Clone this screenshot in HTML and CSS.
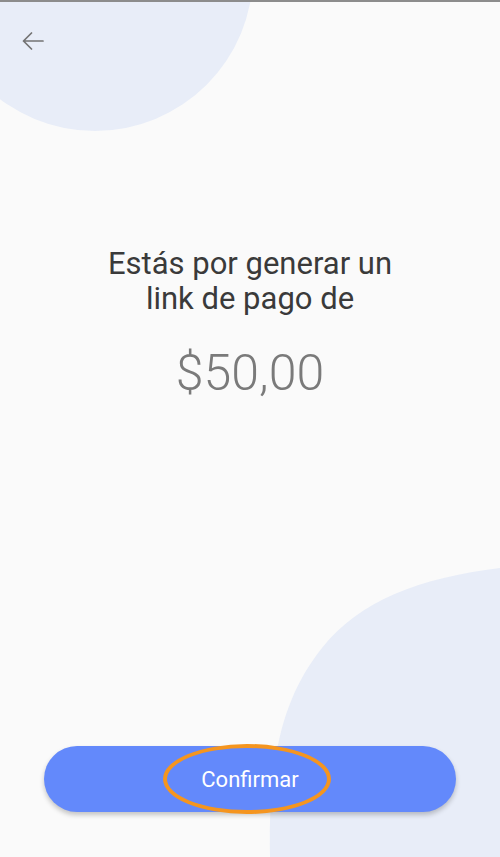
FILE: index.html
```html
<!DOCTYPE html>
<html lang="es">
<head>
    <meta charset="UTF-8">
    <meta name="viewport" content="width=device-width, initial-scale=1.0">
    <title>Confirmar link de pago</title>
    <link rel="stylesheet" href="styles.css">
</head>
<body>
    <div class="screen">
        <svg class="blob blob-top" width="260" height="130" viewBox="0 0 260 130">
            <circle cx="95" cy="-29" r="158" fill="#e8edf8"/>
        </svg>
        <svg class="blob blob-bottom" width="240" height="300" viewBox="260 557 240 300">
            <path d="M500 568 C420 578 360 600 322 648 C282 698 268 760 270 857 L500 857 Z" fill="#e8edf8"/>
        </svg>

        <header class="top-bar">
            <button class="back" aria-label="Volver">
                <svg width="22" height="18" viewBox="0 0 22 18">
                    <path d="M21 9H1.5M9.5 1L1.5 9l8 8" fill="none" stroke="#737373" stroke-width="1.7" stroke-linecap="round" stroke-linejoin="round"/>
                </svg>
            </button>
        </header>

        <main class="content">
            <h1 class="title">Estás por generar un<br>link de pago de</h1>
            <p class="amount">$50,00</p>
        </main>

        <div class="actions">
            <button class="confirm">
                Confirmar
                <span class="highlight"></span>
            </button>
        </div>
    </div>
</body>
</html>
```

FILE: styles.css
```css
body {
    margin: 0;
    font-family: Roboto, "Noto Sans", Arial, sans-serif;
    background-color: #fafafa;
}
.screen {
    position: relative;
    width: 500px;
    height: 857px;
    box-sizing: border-box;
    border-top: 2px solid #8c8c8c;
    display: flex;
    flex-direction: column;
    overflow: hidden;
}
.blob {
    position: absolute;
    z-index: 0;
}
.blob-top {
    top: 0;
    left: 0;
}
.blob-bottom {
    right: 0;
    bottom: 0;
}
.top-bar {
    position: relative;
    z-index: 1;
    height: 78px;
    padding-left: 22px;
    display: flex;
    align-items: center;
}
.back {
    background: none;
    border: none;
    padding: 0;
    width: 22px;
    height: 18px;
    cursor: pointer;
}
.back svg {
    display: block;
}
.content {
    position: relative;
    z-index: 1;
    padding-top: 166px;
    text-align: center;
}
.title {
    margin: 0;
    font-size: 31px;
    font-weight: 400;
    line-height: 35px;
    color: #3a3a3a;
}
.amount {
    margin: 29px 0 0;
    font-size: 50px;
    font-weight: 300;
    line-height: 56px;
    color: #7a7a7a;
}
.actions {
    position: relative;
    z-index: 1;
    margin-top: auto;
    padding: 0 44px 45px;
}
.confirm {
    position: relative;
    width: 100%;
    height: 66px;
    border: none;
    border-radius: 33px;
    background-color: #6389fb;
    color: #ffffff;
    font-family: Roboto, "Noto Sans", Arial, sans-serif;
    font-size: 22px;
    box-shadow: 0 3px 5px rgba(0, 0, 0, 0.22);
    cursor: pointer;
}
.highlight {
    position: absolute;
    left: 119px;
    top: -2px;
    width: 160px;
    height: 62px;
    border: 4px solid #f5951f;
    border-radius: 50%;
}
```
